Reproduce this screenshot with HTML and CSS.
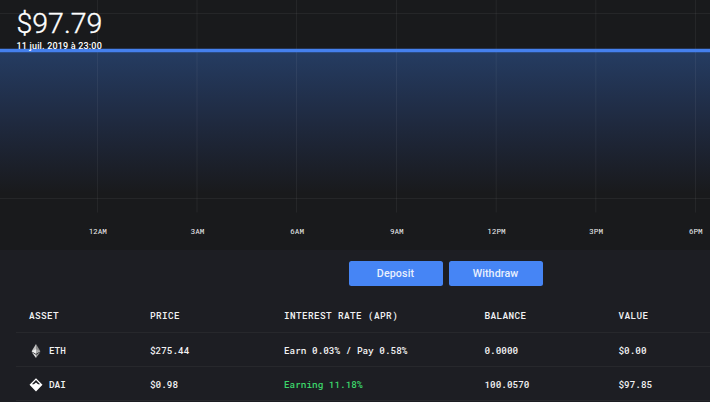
FILE: index.html
```html
<!DOCTYPE html>
<html lang="en">
<head>
<meta charset="utf-8">
<title>Wallet</title>
<link rel="stylesheet" href="styles.css">
</head>
<body>
<main class="app">
  <section class="chart">
    <svg class="plot" viewBox="0 0 710 215" width="710" height="215" aria-hidden="true">
      <defs>
        <linearGradient id="area" x1="0" y1="0" x2="0" y2="1">
          <stop offset="0" stop-color="#3a7ae0" stop-opacity=".36"/>
          <stop offset="1" stop-color="#3a68e0" stop-opacity="0"/>
        </linearGradient>
      </defs>
      <rect x="0" y="51" width="710" height="142" fill="url(#area)"/>
      <path class="gridline" d="M0 13.5H710M0 198.5H710M97.5 0V212.500M197 0V212.500M296.500 0V212.500M396.500 0V212.500M496.200 0V212.500M595.800 0V212.500M695.500 0V212.500"/>
      <path class="series" d="M0 50.500H710"/>
    </svg>
    <div class="summary">
      <div class="total">$97.79</div>
      <div class="date">11 juil. 2019 à 23:00</div>
    </div>
    <div class="axis">
      <span>12AM</span><span>3AM</span><span>6AM</span><span>9AM</span><span>12PM</span><span>3PM</span><span>6PM</span>
    </div>
  </section>
  <section class="account">
    <div class="actions">
      <button class="button">Deposit</button>
      <button class="button">Withdraw</button>
    </div>
    <div class="table">
      <div class="row head">
        <span>ASSET</span><span>PRICE</span><span>INTEREST RATE (APR)</span><span>BALANCE</span><span>VALUE</span>
      </div>
      <div class="row">
        <span class="asset">
          <svg class="icon" viewBox="0 0 14 14" width="14" height="14" aria-hidden="true">
            <path fill="#c4c4c4" d="M7 0L2.600 7.200 7 9.800z"/>
            <path fill="#8c8c8c" d="M7 0l4.400 7.200L7 9.800z"/>
            <path fill="#eee" d="M7 5.200L2.600 7.200 7 9.800z"/>
            <path fill="#aaa" d="M7 5.200l4.400 2L7 9.800z"/>
            <path fill="#ddd" d="M2.600 8.100L7 14v-3.300z"/>
            <path fill="#999" d="M11.400 8.100L7 14v-3.300z"/>
          </svg>ETH</span>
        <span>$275.44</span><span>Earn 0.03% / Pay 0.58%</span><span>0.0000</span><span>$0.00</span>
      </div>
      <div class="row">
        <span class="asset">
          <svg class="icon" viewBox="0 0 14 14" width="14" height="14" aria-hidden="true">
            <path fill="#fff" fill-rule="evenodd" d="M7 0.300L13.500 6.800 7 13.500 0.500 6.800zM7 1.900L2.900 6.200H4.900L7 4.500 9.100 6.200H11.100z"/>
          </svg>DAI</span>
        <span>$0.98</span><span class="earning">Earning 11.18%</span><span>100.0570</span><span>$97.85</span>
      </div>
    </div>
  </section>
</main>
</body>
</html>
```
FILE: styles.css
```css
* {
  box-sizing: border-box;
}

body {
  margin: 0;
  background: #1d1e23;
  color: #f2f2f3;
  font-family: "Roboto Mono", "DejaVu Sans Mono", monospace;
  overflow: hidden;
}

.app {
  width: 710px;
  height: 402px;
  overflow: hidden;
}

.chart {
  position: relative;
  height: 250px;
  background: #191a1c;
}

.plot {
  display: block;
}

.gridline {
  fill: none;
  stroke: #fff;
  stroke-opacity: .055;
}

.series {
  stroke: #4580ed;
  stroke-width: 3.4;
}

.summary {
  position: absolute;
  left: 16px;
  top: 8px;
  color: #fff;
  font-family: Roboto, sans-serif;
  white-space: nowrap;
}

.total {
  padding-left: .5px;
  font-size: 28.5px;
  font-weight: 300;
  line-height: 32px;
  -webkit-text-stroke: .35px #fff;
}

.date {
  padding-left: .5px;
  font-size: 9px;
  font-weight: 500;
  line-height: 12px;
  letter-spacing: .18px;
}

.axis {
  display: grid;
  grid-template-columns: repeat(7, 99.67px);
  margin-left: 48px;
  padding-top: 10px;
  font-size: 7.6px;
  line-height: 12px;
  text-align: center;
}

.account {
  height: 152px;
  padding: 11px 0 0 16px;
}

.actions {
  display: flex;
  gap: 6px;
  padding-left: 332.500px;
}

.button {
  width: 94px;
  height: 25px;
  padding: 0;
  border: 0;
  border-radius: 2.500px;
  background: #4685f5;
  color: #e9f0fe;
  font: 500 10.700px/25px Roboto, sans-serif;
  letter-spacing: .1px;
}

.table {
  padding-top: 12px;
}

.row {
  display: grid;
  grid-template-columns: 121px 134px 200.500px 134px 1fr;
  align-items: center;
  height: 34px;
  padding: 2px 0 0 13px;
  border-bottom: 1px solid #27282c;
  font-size: 9.350px;
  font-weight: 500;
  white-space: nowrap;
}

.head {
  height: 35px;
  padding-top: 0;
  letter-spacing: .4px;
}

.asset {
  display: flex;
  align-items: center;
  gap: 6px;
}

.icon {
  flex: none;
}

.earning {
  color: #3cd56a;
}
```
